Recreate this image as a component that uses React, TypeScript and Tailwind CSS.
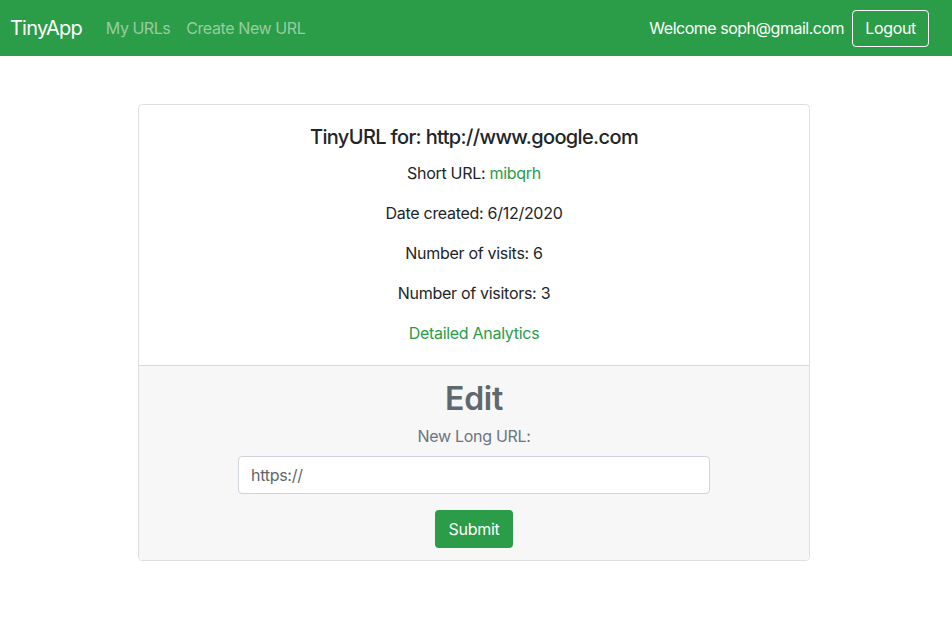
export default function App() {
  return (
    <div className="min-h-screen bg-white text-[#212529]" style={{ fontFamily: 'Inter, "Noto Sans", sans-serif' }}>
      <nav className="flex h-14 items-center justify-between bg-[#2b9c47] pl-[10px] pr-[23px] tracking-[-0.02em]">
        <div className="flex items-center">
          <a href="#" className="mr-4 text-[20px] leading-[30px] tracking-[-0.04em] text-white">
            TinyApp
          </a>
          <a href="#" className="px-2 text-base tracking-[-0.03em] text-white/50">
            My URLs
          </a>
          <a href="#" className="px-2 text-base tracking-[-0.025em] text-white/50">
            Create New URL
          </a>
        </div>
        <div className="flex items-center">
          <span className="mr-2 text-base tracking-[-0.03em] text-white">Welcome soph@gmail.com</span>
          <button className="h-[37px] rounded border border-white px-3 text-base text-white">Logout</button>
        </div>
      </nav>

      <div className="flex justify-center pr-[4px] pt-12">
        <div className="w-[672px] overflow-hidden rounded border border-black/[0.125] text-center tracking-[-0.018em]">
          <div className="p-5">
            <h5 className="mb-3 text-[20px] font-medium leading-[24px] tracking-[-0.032em]">
              TinyURL for: http://www.google.com
            </h5>
            <p className="mb-4 text-base leading-6">
              Short URL:{' '}
              <a href="#" className="text-[#2b9c47]">
                mibqrh
              </a>
            </p>
            <p className="mb-4 text-base leading-6">Date created: 6/12/2020</p>
            <p className="mb-4 text-base leading-6">Number of visits: 6</p>
            <p className="mb-4 text-base leading-6">Number of visitors: 3</p>
            <p className="text-base leading-6">
              <a href="#" className="text-[#2b9c47]">
                Detailed Analytics
              </a>
            </p>
          </div>
          <div className="flex flex-col items-center border-t border-black/[0.125] bg-[#f7f7f7] px-5 py-3 text-[#6c757d]">
            <h2 className="mb-[6px] mt-[2px] text-[32px] font-semibold leading-[38px] text-[#60686f]">Edit</h2>
            <label className="mb-2 text-base leading-6">New Long URL:</label>
            <input
              type="text"
              placeholder="https://"
              className="mb-4 h-[38px] w-[472px] rounded border border-[#ced4da] bg-white px-3 text-base text-[#495057] placeholder:text-[#5f676e]"
            />
            <button className="h-[38px] w-[78px] rounded bg-[#2b9c47] text-base text-white">Submit</button>
          </div>
        </div>
      </div>
    </div>
  );
}
